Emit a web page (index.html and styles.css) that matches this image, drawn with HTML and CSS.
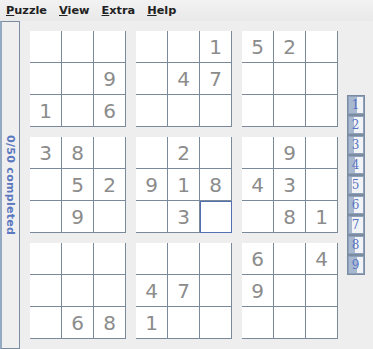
FILE: index.html
```html
<!DOCTYPE html>
<html lang="en">
<head>
  <meta charset="UTF-8">
  <title>Sudoku</title>
  <link rel="stylesheet" href="styles.css">
</head>
<body>
  <div class="menubar">
    <span class="menu"><u>P</u>uzzle</span>
    <span class="menu"><u>V</u>iew</span>
    <span class="menu"><u>E</u>xtra</span>
    <span class="menu"><u>H</u>elp</span>
  </div>

  <div class="main">
    <div class="status"><span>0/50 completed</span></div>

    <div class="board">
      <div class="box">
        <div class="cell"></div><div class="cell"></div><div class="cell"></div>
        <div class="cell"></div><div class="cell"></div><div class="cell">9</div>
        <div class="cell">1</div><div class="cell"></div><div class="cell">6</div>
      </div>
      <div class="box">
        <div class="cell"></div><div class="cell"></div><div class="cell">1</div>
        <div class="cell"></div><div class="cell">4</div><div class="cell">7</div>
        <div class="cell"></div><div class="cell"></div><div class="cell"></div>
      </div>
      <div class="box">
        <div class="cell">5</div><div class="cell">2</div><div class="cell"></div>
        <div class="cell"></div><div class="cell"></div><div class="cell"></div>
        <div class="cell"></div><div class="cell"></div><div class="cell"></div>
      </div>
      <div class="box">
        <div class="cell">3</div><div class="cell">8</div><div class="cell"></div>
        <div class="cell"></div><div class="cell">5</div><div class="cell">2</div>
        <div class="cell"></div><div class="cell">9</div><div class="cell"></div>
      </div>
      <div class="box">
        <div class="cell"></div><div class="cell">2</div><div class="cell"></div>
        <div class="cell">9</div><div class="cell">1</div><div class="cell">8</div>
        <div class="cell"></div><div class="cell">3</div><div class="cell selected"></div>
      </div>
      <div class="box">
        <div class="cell"></div><div class="cell">9</div><div class="cell"></div>
        <div class="cell">4</div><div class="cell">3</div><div class="cell"></div>
        <div class="cell"></div><div class="cell">8</div><div class="cell">1</div>
      </div>
      <div class="box">
        <div class="cell"></div><div class="cell"></div><div class="cell"></div>
        <div class="cell"></div><div class="cell"></div><div class="cell"></div>
        <div class="cell"></div><div class="cell">6</div><div class="cell">8</div>
      </div>
      <div class="box">
        <div class="cell"></div><div class="cell"></div><div class="cell"></div>
        <div class="cell">4</div><div class="cell">7</div><div class="cell"></div>
        <div class="cell">1</div><div class="cell"></div><div class="cell"></div>
      </div>
      <div class="box">
        <div class="cell">6</div><div class="cell"></div><div class="cell">4</div>
        <div class="cell">9</div><div class="cell"></div><div class="cell"></div>
        <div class="cell"></div><div class="cell"></div><div class="cell"></div>
      </div>
    </div>

    <div class="side">
      <div class="digits">
        <div class="digit" style="--p: 56%">1</div>
        <div class="digit" style="--p: 33%">2</div>
        <div class="digit" style="--p: 33%">3</div>
        <div class="digit" style="--p: 44%">4</div>
        <div class="digit" style="--p: 22%">5</div>
        <div class="digit" style="--p: 33%">6</div>
        <div class="digit" style="--p: 22%">7</div>
        <div class="digit" style="--p: 44%">8</div>
        <div class="digit" style="--p: 56%">9</div>
      </div>
    </div>
  </div>
</body>
</html>
```

FILE: styles.css
```css
body {
  margin: 0;
  padding: 0;
  width: 373px;
  height: 349px;
  background: #eeeeee;
  font-family: "DejaVu Sans", sans-serif;
  overflow: hidden;
}
.menubar {
  height: 21px;
  display: flex;
  align-items: center;
  padding-left: 6px;
  gap: 12px;
  box-sizing: border-box;
  background: linear-gradient(#f2f2f2, #e9e9e9);
}
.menu {
  font-size: 11.3px;
  font-weight: bold;
  color: #222;
}
.main {
  display: flex;
  height: 328px;
}
.status {
  width: 20px;
  box-sizing: border-box;
  border: 1px solid #7b8ca0;
  border-left: 2px solid #94a9c2;
  display: flex;
  align-items: center;
  justify-content: center;
  background: #efefef;
}
.status span {
  writing-mode: vertical-rl;
  font-size: 11px;
  font-weight: bold;
  color: #5b78c0;
  letter-spacing: 0.3px;
}
.board {
  margin: 10px 0 0 10px;
  display: grid;
  grid-template-columns: repeat(3, 96px);
  grid-template-rows: repeat(3, 96px);
  gap: 10px;
}
.box {
  display: grid;
  grid-template-columns: repeat(3, 32px);
  grid-template-rows: repeat(3, 32px);
  background: #fff;
}
.cell {
  box-sizing: border-box;
  border-right: 1px solid #7b8a9b;
  border-bottom: 1px solid #7b8a9b;
  display: flex;
  align-items: center;
  justify-content: center;
  font-size: 20px;
  color: #8c8c8c;
}
.cell.selected {
  outline: 1px solid #5470b4;
  outline-offset: -1px;
  box-shadow: inset 1px 1px 0 #5470b4;
}
.side {
  flex: 1;
  display: flex;
  align-items: center;
  justify-content: center;
}
.digits {
  width: 16px;
  border: 1px solid #7b8ca0;
  background: #7b8ca0;
  display: flex;
  flex-direction: column;
  gap: 2px;
}
.digit {
  height: 18px;
  box-sizing: border-box;
  border: 1px solid #8ea0bc;
  font-family: "DejaVu Serif", serif;
  font-size: 12px;
  color: #5a74c4;
  display: flex;
  align-items: center;
  justify-content: center;
  background: linear-gradient(to right, #a7b8cf var(--p), #f1f3f7 var(--p));
}
```
